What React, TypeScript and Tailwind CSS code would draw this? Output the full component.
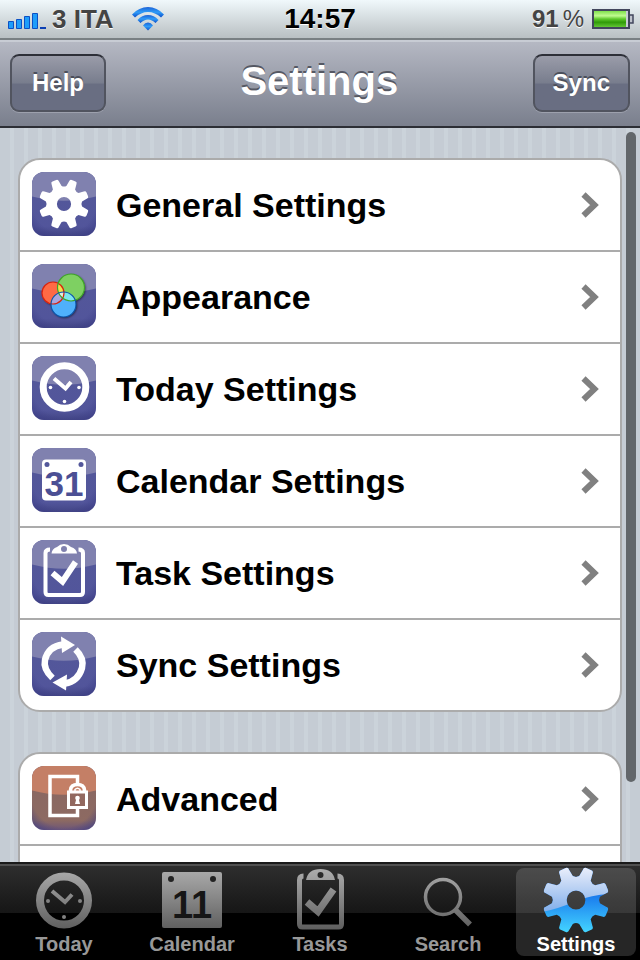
import React, { useState } from "react";

// builds the outline of an eight-toothed gear with a round hole
function gearPath(cx: number, cy: number, r: number) {
  const root = r * 0.7;
  const at = (angle: number, radius: number) =>
    `${(cx + Math.cos(angle) * radius).toFixed(2)} ${(cy + Math.sin(angle) * radius).toFixed(2)}`;
  let d = "";
  for (let i = 0; i < 8; i++) {
    const a = (i + 0.5) * (Math.PI / 4);
    d += `${i === 0 ? "M" : "L"}${at(a - 0.26, root * 1.03)}`;
    d += `L${at(a - 0.17, r * 0.92)}Q${at(a - 0.16, r * 1.01)} ${at(a - 0.08, r)}`;
    d += `L${at(a + 0.08, r)}Q${at(a + 0.16, r * 1.01)} ${at(a + 0.17, r * 0.92)}`;
    d += `L${at(a + 0.26, root * 1.03)}Q${at(a + Math.PI / 8, root * 0.95)} ${at(a + Math.PI / 4 - 0.26, root * 1.03)}`;
  }
  const h = r * 0.28;
  return `${d}ZM${cx - h} ${cy}a${h} ${h} 0 1 0 ${h * 2} 0a${h} ${h} 0 1 0 ${-h * 2} 0Z`;
}

function IconTile({
  children,
  brown = false,
}: {
  children: React.ReactNode;
  brown?: boolean;
}) {
  const id = brown ? "brown" : "purple";
  return (
    <svg viewBox="0 0 64 64" className="mb-0.5 h-16 w-16 shrink-0" aria-hidden="true">
      <defs>
        <linearGradient id={`tile-${id}`} x1="0" y1="0" x2="0" y2="1">
          <stop offset="0.4" stopColor={brown ? "#8a6862" : "#53579a"} />
          <stop offset="0.85" stopColor={brown ? "#8d6a62" : "#52559b"} />
          <stop offset="1" stopColor={brown ? "#6c5578" : "#424585"} />
        </linearGradient>
        <radialGradient id={`edge-${id}`} cx="0.5" cy="0.45" r="0.72">
          <stop offset="0.7" stopColor="#3b3c85" stopOpacity="0" />
          <stop offset="1" stopColor="#3b3c85" stopOpacity="0.8" />
        </radialGradient>
        <clipPath id={`clip-${id}`}>
          <rect width="64" height="64" rx="12" />
        </clipPath>
      </defs>
      <g clipPath={`url(#clip-${id})`}>
        <rect width="64" height="64" fill={`url(#tile-${id})`} />
        <rect width="64" height="64" fill={`url(#edge-${id})`} />
        <path
          d="M0 0H64V24.500Q32 33 0 24.500Z"
          fill={brown ? "#c47f66" : "#8081af"}
        />
      </g>
      {children}
    </svg>
  );
}

function GeneralIcon() {
  return (
    <IconTile>
      <path d={gearPath(32, 32, 25.3)} fill="#fff" fillRule="evenodd" />
    </IconTile>
  );
}

function AppearanceIcon() {
  return (
    <IconTile>
      <defs>
        <clipPath id="red-disc">
          <circle cx="21" cy="29" r="11" />
        </clipPath>
        <clipPath id="green-disc">
          <circle cx="39" cy="23.500" r="13.500" />
        </clipPath>
        <filter id="disc-shadow" x="-30%" y="-30%" width="160%" height="160%">
          <feDropShadow dx="1" dy="1" stdDeviation="0.8" floodOpacity="0.6" />
        </filter>
      </defs>
      <g filter="url(#disc-shadow)">
        <circle cx="21" cy="29" r="11" fill="#ff6a45" />
        <circle cx="39" cy="23.500" r="13.500" fill="#7ed062" />
        <circle cx="31.500" cy="40.500" r="12.500" fill="#4fb0fb" />
      </g>
      <circle cx="39" cy="23.500" r="13.500" fill="#f2e04a" clipPath="url(#red-disc)" />
      <circle cx="31.500" cy="40.500" r="12.500" fill="#7de6ec" clipPath="url(#green-disc)" />
      <circle cx="31.500" cy="40.500" r="12.500" fill="#aaa6de" clipPath="url(#red-disc)" />
      <g clipPath="url(#red-disc)">
        <circle cx="31.500" cy="40.500" r="12.500" fill="#dff0e4" clipPath="url(#green-disc)" />
      </g>
      <g fill="none" strokeWidth="1.200">
        <circle cx="21" cy="29" r="11" stroke="#d8230f" />
        <circle cx="39" cy="23.500" r="13.500" stroke="#3fa428" />
        <circle cx="31.500" cy="40.500" r="12.500" stroke="#0c53a8" />
      </g>
    </IconTile>
  );
}

function TodayIcon() {
  return (
    <IconTile>
      <g fill="none" stroke="#fff">
        <circle cx="32.500" cy="31" r="21.300" strokeWidth="7" />
        <path d="M22 22.500L33.500 32.500L39 26" strokeWidth="4" />
      </g>
      <g fill="#fff">
        <circle cx="18.500" cy="31.500" r="1.800" />
        <circle cx="47" cy="31.500" r="1.800" />
        <circle cx="32.500" cy="45.500" r="1.800" />
      </g>
    </IconTile>
  );
}

function CalendarIcon() {
  return (
    <IconTile>
      <rect x="10" y="11.500" width="44" height="41" rx="4" fill="#fff" />
      <circle cx="15" cy="16.500" r="2.500" fill="#53579a" />
      <circle cx="49" cy="16.500" r="2.500" fill="#53579a" />
      <text
        x="32"
        y="48"
        textAnchor="middle"
        fontSize="35"
        fontWeight="bold"
        fill="#4b4f94"
      >
        31
      </text>
    </IconTile>
  );
}

function TaskIcon() {
  return (
    <IconTile>
      <path
        d="M18 9.500Q13.500 9.500 13.500 13V52Q13.500 55 16.500 55H48Q51 55 51 52V13Q51 9.500 46.500 9.500"
        fill="none"
        stroke="#fff"
        strokeWidth="4"
      />
      <path
        d="M19.500 13.500Q20 8.500 25 7Q28 4 32 4Q36 4 39 7Q44.500 8.500 45 13.500ZM32 6A3 3 0 1 0 32 12A3 3 0 1 0 32 6Z"
        fill="#fff"
        fillRule="evenodd"
      />
      <path d="M20.500 33L30.500 41.500L43.500 22" fill="none" stroke="#fff" strokeWidth="6" />
    </IconTile>
  );
}

function SyncIcon() {
  return (
    <IconTile>
      <g fill="none" stroke="#fff" strokeWidth="6.500">
        <path d="M20.500 46Q11 37 13 28Q16 14.500 31 12.500" />
        <path d="M43.500 17.500Q52.500 26 50 36Q46 49.500 33 51.500" />
      </g>
      <path d="M29 4.500L43 13L30 21Z" fill="#fff" />
      <path d="M35 42.500L20.500 50.500L34 58.500Z" fill="#fff" />
    </IconTile>
  );
}

function AdvancedIcon() {
  return (
    <IconTile brown>
      <path
        d="M45.500 17V10.500H18V49.500H45.500V43"
        fill="none"
        stroke="#fff"
        strokeWidth="3.500"
      />
      <path d="M38.500 25V24Q39 18.500 45.500 18.500Q52 18.500 52.500 24V25" fill="none" stroke="#fff" strokeWidth="3.500" />
      <path d="M43 25V23.500Q45.500 21 48 23.500V25" fill="none" stroke="#fff" strokeWidth="1.500" />
      <rect x="36.500" y="26" width="18" height="15.500" fill="#92685f" stroke="#fff" strokeWidth="3" />
      <circle cx="45.500" cy="32" r="2.300" fill="#fff" />
      <path d="M44.500 32H46.500L48 38H43Z" fill="#fff" />
    </IconTile>
  );
}

function TabIcon({ name }: { name: string }) {
  return (
    <svg viewBox="2 2 64 64" className="h-16 w-16 overflow-visible" aria-hidden="true">
      <defs>
        <linearGradient id="metal" gradientUnits="userSpaceOnUse" x1="0" y1="4" x2="0" y2="64">
          <stop offset="0" stopColor="#ababab" />
          <stop offset="1" stopColor="#5e5e5e" />
        </linearGradient>
        <linearGradient id="gear-top" gradientUnits="userSpaceOnUse" x1="0" y1="0" x2="0" y2="48">
          <stop offset="0" stopColor="#eef1fc" />
          <stop offset="1" stopColor="#7cabe9" />
        </linearGradient>
        <linearGradient id="gear-bottom" gradientUnits="userSpaceOnUse" x1="0" y1="28" x2="0" y2="66">
          <stop offset="0" stopColor="#1877ec" />
          <stop offset="1" stopColor="#43d4ff" />
        </linearGradient>
        <clipPath id="gear-clip">
          <path d={gearPath(34, 34, 33.5)} clipRule="evenodd" />
        </clipPath>
      </defs>
      {name === "Today" && (
        <g>
          <circle cx="34" cy="34.500" r="24" fill="none" stroke="url(#metal)" strokeWidth="8" />
          <path d="M22 25L35 36L42 28.500" fill="none" stroke="url(#metal)" strokeWidth="4" />
          <g fill="#828282">
            <circle cx="18" cy="35" r="2" />
            <circle cx="50" cy="35" r="2" />
            <circle cx="34" cy="51" r="2" />
          </g>
        </g>
      )}
      {name === "Calendar" && (
        <g>
          <rect x="4" y="6" width="60" height="56" rx="2" fill="url(#metal)" />
          <circle cx="13" cy="13" r="3" fill="#222" />
          <circle cx="55" cy="13" r="3" fill="#222" />
          <text
            x="34"
            y="52"
            textAnchor="middle"
            fontSize="38"
            fontWeight="bold"
            fill="#161616"
          >
            11
          </text>
        </g>
      )}
      {name === "Tasks" && (
        <g>
          <path
            d="M17.500 10Q13.500 10 13.500 14V58Q13.500 61 16.500 61H52.500Q55.500 61 55.500 58V14Q55.500 10 51.500 10"
            fill="none"
            stroke="url(#metal)"
            strokeWidth="5"
          />
          <path
            d="M20 14Q22 3 34.500 3Q47 3 49 14ZM34.500 6A3 3 0 1 0 34.500 12A3 3 0 1 0 34.500 6Z"
            fill="url(#metal)"
            fillRule="evenodd"
          />
          <path d="M21 36L32 45.500L47.500 23.500" fill="none" stroke="url(#metal)" strokeWidth="7" />
        </g>
      )}
      {name === "Search" && (
        <g fill="none" stroke="url(#metal)">
          <circle cx="29" cy="31" r="17.500" strokeWidth="3.500" />
          <path d="M41 43.500L56 58.500" strokeWidth="5.500" />
        </g>
      )}
      {name === "Settings" && (
        <g clipPath="url(#gear-clip)">
          <rect width="68" height="68" fill="url(#gear-bottom)" />
          <path d="M0 0H68V28Q50 29 34 35Q16 43 0 46Z" fill="url(#gear-top)" />
        </g>
      )}
    </svg>
  );
}

const settings = [
  { label: "General Settings", Icon: GeneralIcon },
  { label: "Appearance", Icon: AppearanceIcon },
  { label: "Today Settings", Icon: TodayIcon },
  { label: "Calendar Settings", Icon: CalendarIcon },
  { label: "Task Settings", Icon: TaskIcon },
  { label: "Sync Settings", Icon: SyncIcon },
];

const tabs = ["Today", "Calendar", "Tasks", "Search", "Settings"];

function Row({ label, Icon }: { label: string; Icon: () => React.ReactNode }) {
  return (
    <li>
      <a href="#" className="flex h-[90px] items-center gap-5 pr-5 pl-3">
        <Icon />
        <span className="flex-1 text-[34px] leading-10 font-bold">{label}</span>
        <svg viewBox="0 0 20 28" className="h-7 w-5" aria-hidden="true">
          <path d="M3.500 3.500L14.500 14L3.500 24.500" fill="none" stroke="#808080" strokeWidth="6" />
        </svg>
      </a>
    </li>
  );
}

function StatusBar() {
  return (
    <div className="flex h-10 items-center border-b-2 border-[#798083] bg-linear-to-b from-[#f0f8fb] to-[#b9c0c3] px-2 [text-shadow:0_1px_0_#fff]">
      <div className="flex flex-1 items-center gap-1.5 text-[26px] leading-8 font-bold text-[#444]">
        <svg viewBox="0 -4 38 22" className="h-[22px] w-[38px]" aria-hidden="true">
          <g fill="#1e9dfa" stroke="#0c50c4">
            <path d="M.5 9.500h5v7h-5zM8.500 7.500h5v9h-5zM16.500 4.500h5v12h-5zM24.500 1.500h5v15h-5z" />
          </g>
          <path d="M32 15h6v2h-6z" fill="#0c40b4" />
        </svg>
        <span>3 ITA</span>
        <svg viewBox="0 0 32 24" className="ml-3 h-6 w-8" aria-hidden="true">
          <defs>
            <linearGradient id="wifi" x1="0" y1="0" x2="0" y2="1">
              <stop offset="0" stopColor="#1c62d6" />
              <stop offset="0.5" stopColor="#2f9cf8" />
              <stop offset="1" stopColor="#0b4cc8" />
            </linearGradient>
          </defs>
          <g fill="url(#wifi)">
            <path d="M0 7.500Q7 0 16 0Q25 0 32 7.500L29 10.500Q23 5 16 5Q9 5 3 10.500Z" />
            <path d="M5.500 13Q10 8 16 8Q22 8 26.500 13L23.500 16Q20 12.500 16 12.500Q12 12.500 8.500 16Z" />
            <path d="M11 18.500Q13 15.500 16 15.500Q19 15.500 21 18.500L16 23.500Z" />
          </g>
        </svg>
      </div>
      <div className="text-[28px] leading-8 font-bold text-black">14:57</div>
      <div className="flex flex-1 items-center justify-end gap-2 text-[24px] leading-8 font-bold text-[#444]">
        <span className="flex gap-1">
          <span>91</span>
          <span className="font-normal">%</span>
        </span>
        <svg viewBox="0 0 42 20" className="-mr-0.5 h-5 w-[42px]" aria-hidden="true">
          <defs>
            <linearGradient id="charge" x1="0" y1="0" x2="0" y2="1">
              <stop offset="0" stopColor="#7fe04c" />
              <stop offset="0.3" stopColor="#c0fb90" />
              <stop offset="0.5" stopColor="#5fc92c" />
              <stop offset="0.7" stopColor="#2f9a08" />
              <stop offset="1" stopColor="#62c634" />
            </linearGradient>
          </defs>
          <rect x="1" y="1" width="36" height="18" fill="#c9ccd6" stroke="#42465c" strokeWidth="2" />
          <rect x="2" y="2" width="32" height="16" fill="url(#charge)" />
          <path d="M38 6h3v8h-3" fill="#bfc3cc" stroke="#42465c" strokeWidth="1.500" />
        </svg>
      </div>
    </div>
  );
}

function BarButton({ children }: { children: React.ReactNode }) {
  return (
    <button className="h-[58px] min-w-24 rounded-[9px] border-2 border-[#51545f] border-t-[#2d2f38] bg-linear-to-b from-[#9a9ca9] from-0% via-[#787d8d] via-50% to-[#696e82] to-52% px-[18px] text-2xl font-bold text-white [box-shadow:0_1px_0_#9da1ad] [text-shadow:0_-2px_0_#4b4f5b]">
      {children}
    </button>
  );
}

export default function App() {
  const [activeTab, setActiveTab] = useState("Settings");

  return (
    <div className="flex h-screen flex-col overflow-hidden bg-black font-['Liberation_Sans',Arial,sans-serif]">
      <StatusBar />
      <header className="flex h-22 items-center justify-between border-t-2 border-b-2 border-t-[#c8ccd4] border-b-[#2c2e35] bg-linear-to-b from-[#b5b8c3] to-[#7a7f8d] px-2.5 pb-0.5">
        <BarButton>Help</BarButton>
        <h1 className="pb-1 text-[40px] leading-12 font-bold text-white [text-shadow:0_-2px_0_#555863]">
          Settings
        </h1>
        <BarButton>Sync</BarButton>
      </header>

      <main className="relative min-h-0 flex-1 overflow-hidden bg-[repeating-linear-gradient(90deg,#c5ccd4_0_10px,#cbd3da_10px_14px)]">
        <div className="flex flex-col gap-10 px-[18px] pt-[30px]">
          <ul className="divide-y-2 divide-[#ababab] rounded-[22px] border-2 border-[#ababab] bg-white">
            {settings.map((item) => (
              <Row key={item.label} {...item} />
            ))}
          </ul>
          <ul className="divide-y-2 divide-[#ababab] rounded-[22px] border-2 border-[#ababab] bg-white">
            <Row label="Advanced" Icon={AdvancedIcon} />
            <li className="h-[90px]" />
          </ul>
        </div>
        {/* scroll indicator */}
        <div className="absolute top-1 right-1 h-[88.5%] w-2.5 rounded-full bg-[#62666a]" />
      </main>

      <nav className="flex border-t-2 border-[#1a1a1a] bg-linear-to-b from-[#2f2f2f] from-0% via-[#161616] via-51% to-black to-51% [box-shadow:inset_0_2px_0_#505050]">
        {tabs.map((tab) => (
          <button
            key={tab}
            onClick={() => setActiveTab(tab)}
            className={`mx-1 mt-1 mb-1 flex h-22 flex-1 flex-col items-center rounded-lg text-xl leading-6 font-bold ${
              activeTab === tab ? "bg-white/15 text-white" : "text-[#989898]"
            }`}
          >
            <TabIcon name={tab} />
            <span>{tab}</span>
          </button>
        ))}
      </nav>
    </div>
  );
}
